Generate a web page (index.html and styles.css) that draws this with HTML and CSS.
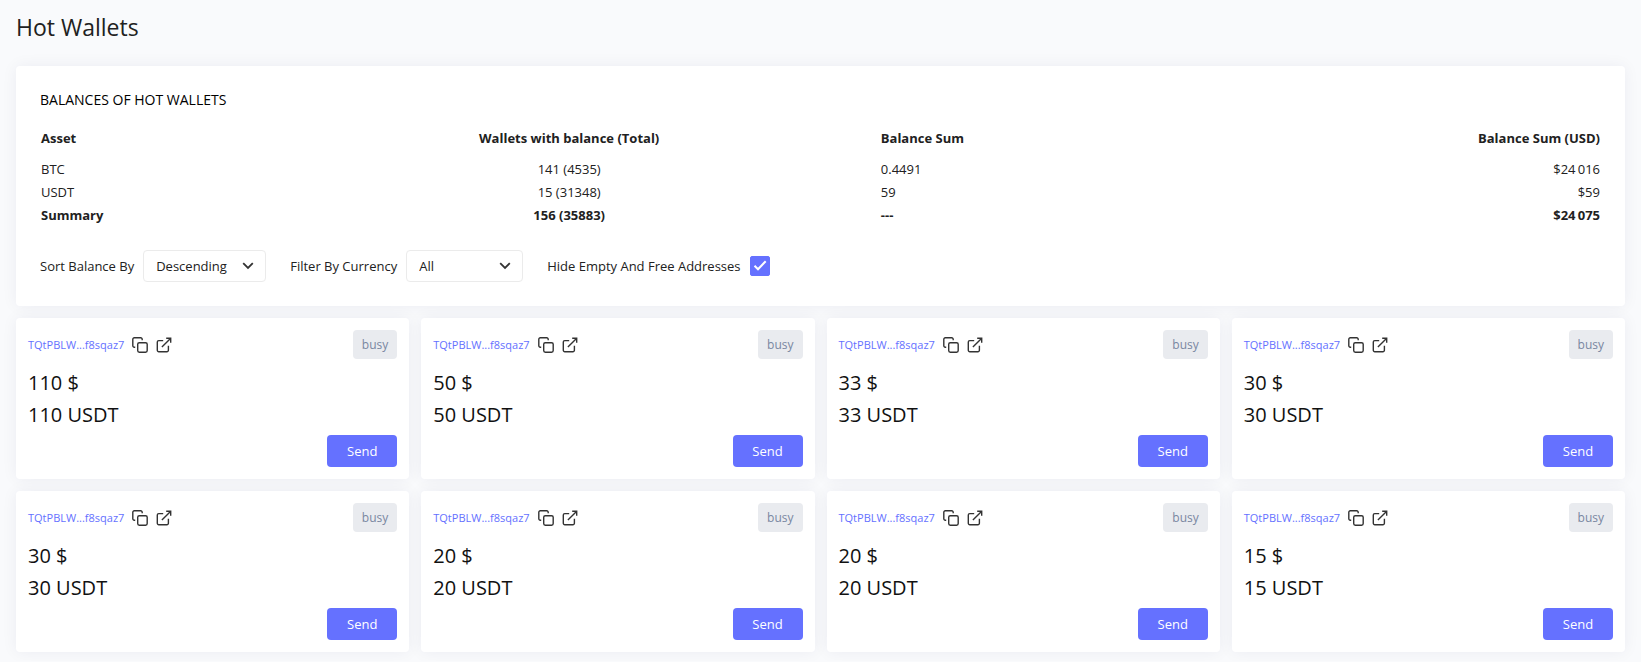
FILE: index.html
```html
<!DOCTYPE html>
<html lang="en">
<head>
<meta charset="utf-8">
<title>Hot Wallets</title>
<meta name="viewport" content="width=device-width, initial-scale=1">
<link rel="stylesheet" href="styles.css">
</head>
<body>
<svg class="sprite" aria-hidden="true">
  <symbol id="copy" viewBox="0 0 16 16">
    <rect x="5.7" y="5.7" width="9.5" height="9.5" rx="1.6"/>
    <path d="M3.2 10.2H2.3A1.5 1.5 0 0 1 .8 8.7V2.3A1.5 1.5 0 0 1 2.3.8h6.4a1.5 1.5 0 0 1 1.5 1.5v.9"/>
  </symbol>
  <symbol id="external" viewBox="0 0 16 16">
    <path d="M12.4 8.8v4.4a1.5 1.5 0 0 1-1.5 1.5H2.8a1.5 1.5 0 0 1-1.5-1.5V5.1a1.5 1.5 0 0 1 1.5-1.5h4.4M10.2 1.3h4.5v4.5M5.9 10.1l8.6-8.6"/>
  </symbol>
  <symbol id="chevron" viewBox="0 0 12 8">
    <path d="M1.2 1.2 6 6l4.8-4.8"/>
  </symbol>
</svg>
<main class="page">
  <h1 class="page-title">Hot Wallets</h1>

  <section class="card balances">
    <h2 class="balances-title">BALANCES OF HOT WALLETS</h2>
    <table class="table">
      <colgroup><col class="col-asset"><col class="col-wallets"><col class="col-sum"><col></colgroup>
      <thead>
        <tr><th>Asset</th><th class="center">Wallets with balance (Total)</th><th>Balance Sum</th><th class="right">Balance Sum (USD)</th></tr>
      </thead>
      <tbody>
        <tr><td>BTC</td><td class="center">141 (4535)</td><td>0.4491</td><td class="right">$24&#8201;016</td></tr>
        <tr><td>USDT</td><td class="center">15 (31348)</td><td>59</td><td class="right">$59</td></tr>
        <tr class="summary"><td>Summary</td><td class="center">156 (35883)</td><td>---</td><td class="right">$24&#8201;075</td></tr>
      </tbody>
    </table>
    <form class="filters">
      <div class="field">
        <label for="sort">Sort Balance By</label>
        <span class="select"><select id="sort" class="sort"><option>Descending</option><option>Ascending</option></select><svg class="chevron"><use href="#chevron"/></svg></span>
      </div>
      <div class="field">
        <label for="currency">Filter By Currency</label>
        <span class="select"><select id="currency" class="currency"><option>All</option><option>BTC</option><option>USDT</option></select><svg class="chevron"><use href="#chevron"/></svg></span>
      </div>
      <div class="field">
        <label for="hide">Hide Empty And Free Addresses</label>
        <span class="check"><input id="hide" type="checkbox" checked><svg class="tick" viewBox="0 0 20 20"><path d="M4.5 9.7 8 13.2l7.7-8"/></svg></span>
      </div>
    </form>
  </section>

  <section class="wallets">
    <article class="card wallet">
      <header class="wallet-head"><a class="address" href="#">TQtPBLW...f8sqaz7</a><span class="actions"><button class="icon" type="button" aria-label="Copy"><svg><use href="#copy"/></svg></button><a class="icon" href="#" aria-label="Open"><svg><use href="#external"/></svg></a></span><span class="badge">busy</span></header>
      <p class="amount">110 $</p><p class="amount">110 USDT</p>
      <button class="send" type="button">Send</button>
    </article>
    <article class="card wallet">
      <header class="wallet-head"><a class="address" href="#">TQtPBLW...f8sqaz7</a><span class="actions"><button class="icon" type="button" aria-label="Copy"><svg><use href="#copy"/></svg></button><a class="icon" href="#" aria-label="Open"><svg><use href="#external"/></svg></a></span><span class="badge">busy</span></header>
      <p class="amount">50 $</p><p class="amount">50 USDT</p>
      <button class="send" type="button">Send</button>
    </article>
    <article class="card wallet">
      <header class="wallet-head"><a class="address" href="#">TQtPBLW...f8sqaz7</a><span class="actions"><button class="icon" type="button" aria-label="Copy"><svg><use href="#copy"/></svg></button><a class="icon" href="#" aria-label="Open"><svg><use href="#external"/></svg></a></span><span class="badge">busy</span></header>
      <p class="amount">33 $</p><p class="amount">33 USDT</p>
      <button class="send" type="button">Send</button>
    </article>
    <article class="card wallet">
      <header class="wallet-head"><a class="address" href="#">TQtPBLW...f8sqaz7</a><span class="actions"><button class="icon" type="button" aria-label="Copy"><svg><use href="#copy"/></svg></button><a class="icon" href="#" aria-label="Open"><svg><use href="#external"/></svg></a></span><span class="badge">busy</span></header>
      <p class="amount">30 $</p><p class="amount">30 USDT</p>
      <button class="send" type="button">Send</button>
    </article>
    <article class="card wallet">
      <header class="wallet-head"><a class="address" href="#">TQtPBLW...f8sqaz7</a><span class="actions"><button class="icon" type="button" aria-label="Copy"><svg><use href="#copy"/></svg></button><a class="icon" href="#" aria-label="Open"><svg><use href="#external"/></svg></a></span><span class="badge">busy</span></header>
      <p class="amount">30 $</p><p class="amount">30 USDT</p>
      <button class="send" type="button">Send</button>
    </article>
    <article class="card wallet">
      <header class="wallet-head"><a class="address" href="#">TQtPBLW...f8sqaz7</a><span class="actions"><button class="icon" type="button" aria-label="Copy"><svg><use href="#copy"/></svg></button><a class="icon" href="#" aria-label="Open"><svg><use href="#external"/></svg></a></span><span class="badge">busy</span></header>
      <p class="amount">20 $</p><p class="amount">20 USDT</p>
      <button class="send" type="button">Send</button>
    </article>
    <article class="card wallet">
      <header class="wallet-head"><a class="address" href="#">TQtPBLW...f8sqaz7</a><span class="actions"><button class="icon" type="button" aria-label="Copy"><svg><use href="#copy"/></svg></button><a class="icon" href="#" aria-label="Open"><svg><use href="#external"/></svg></a></span><span class="badge">busy</span></header>
      <p class="amount">20 $</p><p class="amount">20 USDT</p>
      <button class="send" type="button">Send</button>
    </article>
    <article class="card wallet">
      <header class="wallet-head"><a class="address" href="#">TQtPBLW...f8sqaz7</a><span class="actions"><button class="icon" type="button" aria-label="Copy"><svg><use href="#copy"/></svg></button><a class="icon" href="#" aria-label="Open"><svg><use href="#external"/></svg></a></span><span class="badge">busy</span></header>
      <p class="amount">15 $</p><p class="amount">15 USDT</p>
      <button class="send" type="button">Send</button>
    </article>
  </section>
</main>
</body>
</html>
```
FILE: styles.css
```css
* { box-sizing: border-box; }

body {
  margin: 0;
  background: #f9fafc;
  color: #212121;
  font: 400 13px/21px "Segoe UI", "Open Sans", "Noto Sans", sans-serif;
}

button, select, input { font: inherit; color: inherit; }

.sprite { display: none; }

.page { padding: 9px 16px; }

.page-title {
  margin: 0 0 21px;
  font-size: 23px;
  font-weight: 400;
  line-height: 36px;
}

.card {
  background: #fff;
  border-radius: 4px;
  box-shadow: 0 0 16px rgba(30, 30, 80, 0.06);
}

.balances { padding: 23px 24px 24px; }

.balances-title {
  margin: 0 0 17px;
  color: #000;
  font-size: 14px;
  font-weight: 400;
  line-height: 21px;
}

.table {
  width: 100%;
  border-collapse: collapse;
  table-layout: fixed;
}
.col-asset { width: 14%; }
.col-wallets { width: 39.8%; }
.col-sum { width: 23%; }
.table th, .table td { padding: 1px; text-align: left; }
.table th { padding-bottom: 9px; font-weight: 700; }
.table .center { text-align: center; }
.table .right { text-align: right; }
.summary { font-weight: 700; }

.filters {
  display: flex;
  flex-wrap: wrap;
  gap: 24px;
  margin-top: 23px;
}
.field { display: flex; align-items: center; gap: 9px; }

.select { position: relative; }
.select select {
  display: block;
  height: 32px;
  padding: 0 32px 0 12px;
  border: 1px solid #ebebeb;
  border-radius: 4px;
  background: #fff;
  appearance: none;
}
.sort { width: 123px; }
.currency { width: 117px; }
.chevron {
  position: absolute;
  right: 12px;
  top: 12px;
  width: 12px;
  height: 8px;
  fill: none;
  stroke: #333;
  stroke-width: 1.8;
  pointer-events: none;
}

.check { position: relative; display: flex; }
.check input {
  width: 20px;
  height: 20px;
  margin: 0;
  border-radius: 2px;
  background: #fff;
  border: 1px solid #ebebeb;
  appearance: none;
}
.check input:checked { background: #6571ff; border-color: #6571ff; }
.tick {
  position: absolute;
  inset: 0;
  fill: none;
  stroke: #fff;
  stroke-width: 2;
  pointer-events: none;
}

.wallets {
  display: grid;
  grid-template-columns: repeat(4, 1fr);
  gap: 12px;
  margin-top: 12px;
}
.wallet { display: flex; flex-direction: column; padding: 12px; }
.wallet-head {
  display: flex;
  align-items: center;
  gap: 8px;
  margin-bottom: 8px;
}
.address { color: #6571ff; font-size: 11px; text-decoration: none; }
.actions { display: flex; gap: 8px; }
.icon {
  display: flex;
  padding: 0;
  border: 0;
  background: none;
}
.icon svg {
  width: 16px;
  height: 16px;
  fill: none;
  stroke: #333;
  stroke-width: 1.4;
}
.badge {
  margin-left: auto;
  padding: 4px 9px;
  border-radius: 4px;
  background: #e9ebef;
  color: #7987a1;
  font-size: 12px;
  font-weight: 400;
}
.amount {
  margin: 0;
  color: #111;
  font-size: 20px;
  font-weight: 500;
  line-height: 32px;
}
.send {
  align-self: flex-end;
  width: 70px;
  height: 32px;
  margin-top: 4px;
  border: 0;
  border-radius: 4px;
  background: #6571ff;
  color: #fff;
}
```
